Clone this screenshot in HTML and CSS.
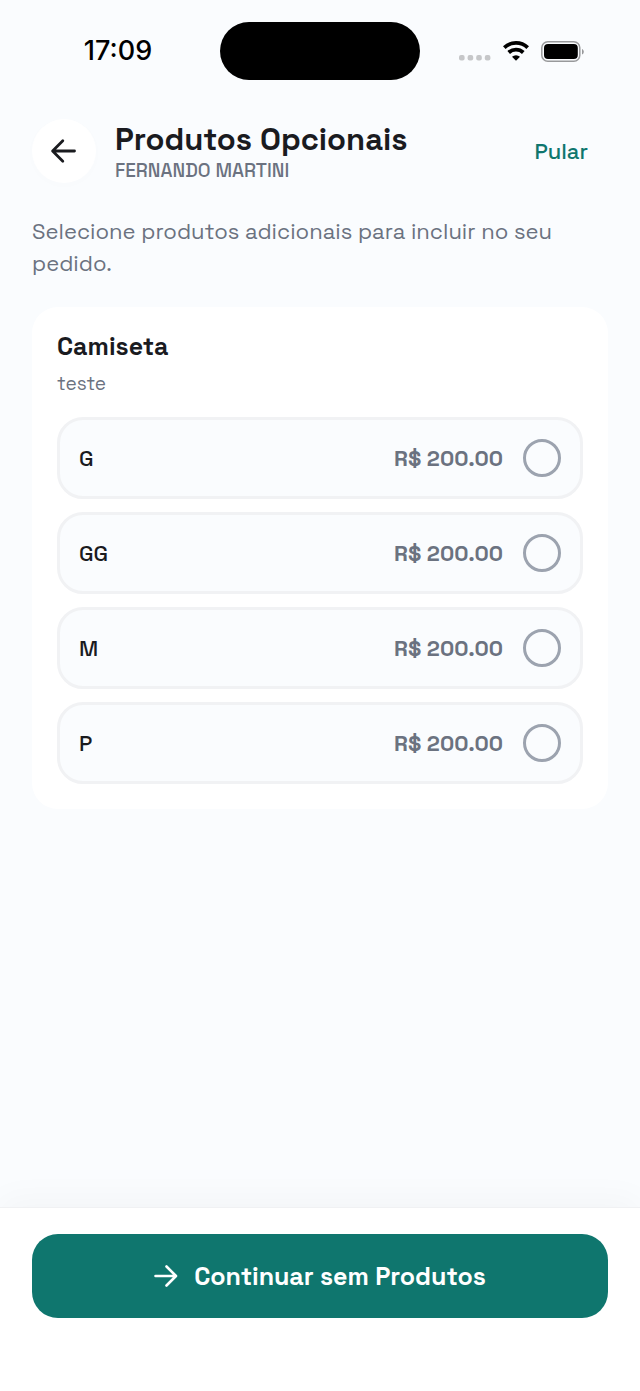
FILE: index.html
```
<!DOCTYPE html>
<html lang="pt-BR">
<head>
    <meta charset="UTF-8">
    <meta name="viewport" content="width=device-width, initial-scale=1.0">
    <title>Produtos Opcionais</title>
    <link rel="stylesheet" href="styles.css">
</head>
<body>
    <div class="status-bar">
        <div class="time">17:09</div>
        <div class="island"></div>
        <div class="status-icons">
            <svg class="signal" width="32" height="6" viewBox="0 0 32 6" fill="#c6c7c9">
                <rect x="0" y="0" width="5.6" height="5.6" rx="2"/>
                <rect x="8.6" y="0" width="5.6" height="5.6" rx="2"/>
                <rect x="17.2" y="0" width="5.6" height="5.6" rx="2"/>
                <rect x="25.8" y="0" width="5.6" height="5.6" rx="2"/>
            </svg>
            <svg class="wifi" width="26" height="20" viewBox="0 0 26 20">
                <g fill="none" stroke="#000" stroke-width="3.8">
                    <path d="M1.3 6.6a17 17 0 0 1 23.4 0"/>
                    <path d="M5.7 11.5a10.7 10.7 0 0 1 14.6 0"/>
                </g>
                <path d="M9 15.7a6 6 0 0 1 8 0L13 19.8z"/>
            </svg>
            <svg class="battery" width="43" height="21" viewBox="0 0 43 21">
                <rect x=".8" y=".8" width="38" height="19.4" rx="6" fill="none" stroke="#98999b" stroke-width="1.5"/>
                <rect x="3" y="3" width="33.8" height="15" rx="4"/>
                <path d="M41 8c2.4 1 2.4 4.6 0 5.6z" fill="#98999b"/>
            </svg>
        </div>
    </div>

    <header class="header">
        <button class="back-button" type="button" aria-label="Voltar">
            <svg width="28" height="28" viewBox="0 0 28 28" fill="none" stroke="#1a1b1f" stroke-width="2.8" stroke-linecap="round" stroke-linejoin="round">
                <path d="M24.5 14H2.8M12.8 3.8L2.6 14L12.8 24.2"/>
            </svg>
        </button>
        <div class="header-text">
            <h1>Produtos Opcionais</h1>
            <p>FERNANDO MARTINI</p>
        </div>
        <a class="skip" href="#">Pular</a>
    </header>

    <main>
        <p class="intro">Selecione produtos adicionais para incluir no seu pedido.</p>

        <section class="card">
            <h2>Camiseta</h2>
            <p class="description">teste</p>
            <div class="options">
                <label class="option">
                    <span class="size">G</span>
                    <span class="price">R$ 200.00</span>
                    <input type="radio" name="camiseta" value="G">
                </label>
                <label class="option">
                    <span class="size">GG</span>
                    <span class="price">R$ 200.00</span>
                    <input type="radio" name="camiseta" value="GG">
                </label>
                <label class="option">
                    <span class="size">M</span>
                    <span class="price">R$ 200.00</span>
                    <input type="radio" name="camiseta" value="M">
                </label>
                <label class="option">
                    <span class="size">P</span>
                    <span class="price">R$ 200.00</span>
                    <input type="radio" name="camiseta" value="P">
                </label>
            </div>
        </section>
    </main>

    <footer class="footer">
        <button class="continue-button" type="button">
            <svg width="24" height="24" viewBox="0 0 24 24" fill="none" stroke="#fff" stroke-width="2.6" stroke-linecap="round" stroke-linejoin="round">
                <path d="M1.5 12H21.500M12.500 2.500L22 12L12.500 21.500"/>
            </svg>
            Continuar sem Produtos
        </button>
    </footer>
</body>
</html>
```
FILE: styles.css
```
* {
    box-sizing: border-box;
}

body {
    margin: 0;
    min-height: 100vh;
    display: flex;
    flex-direction: column;
    font-family: 'Space Grotesk', 'Inter', sans-serif;
    background: #fafcfe;
    color: #1a1b1f;
}

h1, h2, p {
    margin: 0;
}

button {
    border: none;
    font-family: inherit;
    cursor: pointer;
}

/* status bar */
.status-bar {
    display: grid;
    grid-template-columns: 1fr 200px 1fr;
    align-items: center;
    height: 102px;
}

.time {
    padding-left: 16px;
    text-align: center;
    font-family: 'Inter', sans-serif;
    font-size: 27px;
    line-height: 32px;
    font-weight: 500;
    color: #000;
}

.island {
    height: 58px;
    border-radius: 29px;
    background: #000;
}

.status-icons {
    display: flex;
    justify-content: center;
    align-items: center;
    gap: 12px;
    padding-right: 18px;
}

.signal {
    margin-top: 14px;
}

/* header */
.header {
    display: flex;
    align-items: center;
    gap: 19px;
    padding: 17px 52px 16px 32px;
}

.back-button {
    display: flex;
    justify-content: center;
    align-items: center;
    width: 64px;
    height: 64px;
    padding: 0;
    border-radius: 50%;
    background: #fff;
    box-shadow: 0 2px 14px rgba(0, 0, 0, 0.01);
}

.header-text {
    flex: 1;
}

.header h1 {
    font-size: 31px;
    line-height: 40px;
    font-weight: 600;
}

.header p {
    font-size: 19px;
    line-height: 24px;
    font-weight: 500;
    color: #6b7280;
}

.skip {
    font-size: 22px;
    line-height: 32px;
    font-weight: 500;
    color: #0f766e;
    text-decoration: none;
}

/* content */
main {
    flex: 1;
    padding: 16px 32px;
}

.intro {
    margin-bottom: 28px;
    font-size: 22px;
    line-height: 32px;
    color: #6b7280;
}

.card {
    padding: 25px;
    border-radius: 26px;
    background: #fff;
}

.card h2 {
    font-size: 25px;
    line-height: 28px;
    font-weight: 600;
}

.description {
    margin: 10px 0 19px;
    font-size: 19px;
    line-height: 28px;
    color: #6b7280;
}

.options {
    display: flex;
    flex-direction: column;
    gap: 13px;
}

.option {
    display: flex;
    align-items: center;
    gap: 20px;
    height: 82px;
    padding: 0 19px;
    border: 3px solid #f1f2f4;
    border-radius: 26px;
    background: #fafcfe;
    font-size: 22px;
    font-weight: 500;
    cursor: pointer;
}

.size {
    flex: 1;
}

.price {
    font-weight: 600;
    color: #6b7280;
}

.option input {
    appearance: none;
    width: 38px;
    height: 38px;
    margin: 0;
    border: 3px solid #9ca3af;
    border-radius: 50%;
    cursor: pointer;
}

.option input:checked {
    border: 10px solid #0f766e;
}

/* footer */
.footer {
    padding: 26px 32px 73px;
    border-top: 1px solid #f0f1f3;
    background: #fff;
    box-shadow: 0 -8px 32px rgba(0, 0, 0, 0.03);
}

.continue-button {
    display: flex;
    justify-content: center;
    align-items: center;
    gap: 16px;
    width: 100%;
    height: 84px;
    border-radius: 26px;
    background: #0f766e;
    color: #fff;
    font-size: 25px;
    font-weight: 600;
}
```
